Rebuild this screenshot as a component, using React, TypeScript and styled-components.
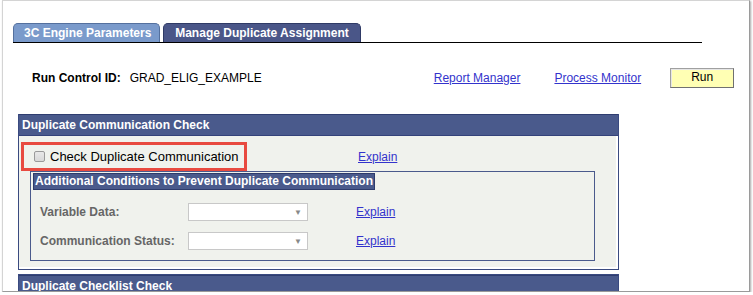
import React from "react";
import styled, { createGlobalStyle } from "styled-components";

const Global = createGlobalStyle`
  html, body { margin: 0; padding: 0; background: #ffffff; }
  body { font-family: "Liberation Sans", Arial, sans-serif; }
`;

const Outer = styled.div`
  padding-left: 2px;
`;

const Frame = styled.div`
  width: 746px;
  height: 290px;
  border: 1px solid #d4d4d4;
  border-right-color: #9a9a9a;
  border-bottom-color: #9a9a9a;
  box-shadow: 1px 1px 2px rgba(0,0,0,0.35);
  background: #fff;
  overflow: hidden;
  box-sizing: content-box;
`;

const TabBar = styled.div`
  display: flex;
  align-items: flex-end;
  gap: 3px;
  margin: 20px 0 0 10px;
  width: 689px;
  border-bottom: 1px solid #000;
  height: 21px;
`;

const Tab = styled.div<{ $active?: boolean }>`
  height: 19px;
  padding: 0 10px;
  box-sizing: border-box;
  width: ${p => (p.$active ? 198 : 147)}px;
  background: ${p => (p.$active ? "#4a5688" : "#7a9acb")};
  border: 1px solid ${p => (p.$active ? "#2f3a66" : "#54709e")};
  border-bottom: none;
  border-radius: 5px 5px 0 0;
  color: #fff;
  font-weight: bold;
  font-size: 12px;
  line-height: 18px;
  white-space: nowrap;
  display: flex;
  justify-content: ${p => (p.$active ? "center" : "flex-start")};
`;

const RunRow = styled.div`
  display: flex;
  align-items: center;
  height: 20px;
  margin: 25px 0 0 29px;
  font-size: 12px;
`;

const Label = styled.span`
  font-weight: bold;
  color: #000;
`;

const Value = styled.span`
  margin-left: 9px;
  color: #000;
`;

const Link = styled.a<{ $ml: number }>`
  color: #3333cc;
  text-decoration: underline;
  font-size: 12px;
  margin-left: ${p => p.$ml}px;
  cursor: pointer;
`;

const RunButton = styled.button`
  margin-left: 29px;
  width: 64px;
  height: 20px;
  background: #ffffb4;
  border: 1px solid #a0a0a0;
  border-right-color: #707070;
  border-bottom-color: #707070;
  box-shadow: inset 1px 1px 0 #e6e6e6;
  font-family: "Liberation Sans", Arial, sans-serif;
  font-size: 12px;
  color: #000;
  padding: 0 0 3px;
`;

const Section = styled.div`
  margin: 26px 0 0 15px;
  width: 599px;
  border: 1px solid #3a4a80;
  border-top: none;
`;

const SectionHeader = styled.div`
  background: #4a5a8c;
  color: #fff;
  font-weight: bold;
  font-size: 12px;
  height: 20px;
  line-height: 20px;
  padding-left: 3px;
  border-top: 1px solid #2f3d70;
  border-bottom: 1px solid #34427a;
  white-space: nowrap;
`;

const SectionBody = styled.div`
  background: #f0f2ed;
  margin: 0 2px 2px 0;
  padding: 6px 0 6px 2px;
`;

const CheckRow = styled.div`
  display: flex;
  align-items: center;
  height: 29px;
`;

const Highlight = styled.div`
  display: flex;
  align-items: center;
  width: 226px;
  height: 29px;
  box-sizing: border-box;
  border: 3px solid #e84a40;
  padding-left: 10px;
  position: relative;
  z-index: 1;
`;

const Box = styled.span`
  width: 11px;
  height: 11px;
  border: 1px solid #9a9a9a;
  border-radius: 2px;
  background: linear-gradient(#e8e8e8, #d8d8d8);
  box-sizing: border-box;
  margin-right: 5px;
`;

const CheckText = styled.span`
  font-size: 13px;
  color: #000;
`;

const Group = styled.div`
  margin: 0 0 0 9px;
  width: 565px;
  height: 90px;
  border: 1px solid #4a5a8c;
  box-sizing: border-box;
  padding: 1px 0 0 2px;
`;

const GroupTitle = styled.div`
  width: fit-content;
  background: #4a5a8c;
  color: #fff;
  font-weight: bold;
  font-size: 12px;
  height: 15px;
  line-height: 15px;
  padding: 0 1px;
  border: 1px solid #2e3b6c;
  white-space: nowrap;
`;

const FieldRow = styled.div<{ $mt: number }>`
  display: flex;
  align-items: center;
  margin-top: ${p => p.$mt}px;
  height: 18px;
`;

const FieldLabel = styled.span`
  width: 148px;
  padding-left: 7px;
  color: #666;
  font-weight: bold;
  font-size: 12px;
`;

const Select = styled.div`
  width: 120px;
  height: 18px;
  box-sizing: border-box;
  border: 1px solid #c8c8c8;
  background: #fff;
  display: flex;
  align-items: center;
  justify-content: flex-end;
  padding-right: 5px;
  color: #888;
  font-size: 8px;
`;

const NextSection = styled.div`
  margin: 4px 0 0 15px;
  width: 599px;
  border: 1px solid #3a4a80;
`;

export default function App() {
  return (
    <>
      <Global />
      <Outer>
        <Frame>
          <TabBar>
            <Tab>3C Engine Parameters</Tab>
            <Tab $active>Manage Duplicate Assignment</Tab>
          </TabBar>
          <RunRow>
            <Label>Run Control ID:</Label>
            <Value>GRAD_ELIG_EXAMPLE</Value>
            <Link $ml={172}>Report Manager</Link>
            <Link $ml={34}>Process Monitor</Link>
            <RunButton>Run</RunButton>
          </RunRow>
          <Section>
            <SectionHeader>Duplicate Communication Check</SectionHeader>
            <SectionBody>
              <CheckRow>
                <Highlight>
                  <Box />
                  <CheckText>Check Duplicate Communication</CheckText>
                </Highlight>
                <Link $ml={111}>Explain</Link>
              </CheckRow>
              <Group>
                <GroupTitle>Additional Conditions to Prevent Duplicate Communication</GroupTitle>
                <FieldRow $mt={13}>
                  <FieldLabel>Variable Data:</FieldLabel>
                  <Select>▼</Select>
                  <Link $ml={48}>Explain</Link>
                </FieldRow>
                <FieldRow $mt={11}>
                  <FieldLabel>Communication Status:</FieldLabel>
                  <Select>▼</Select>
                  <Link $ml={48}>Explain</Link>
                </FieldRow>
              </Group>
            </SectionBody>
          </Section>
          <NextSection>
            <SectionHeader>Duplicate Checklist Check</SectionHeader>
          </NextSection>
        </Frame>
      </Outer>
    </>
  );
}
